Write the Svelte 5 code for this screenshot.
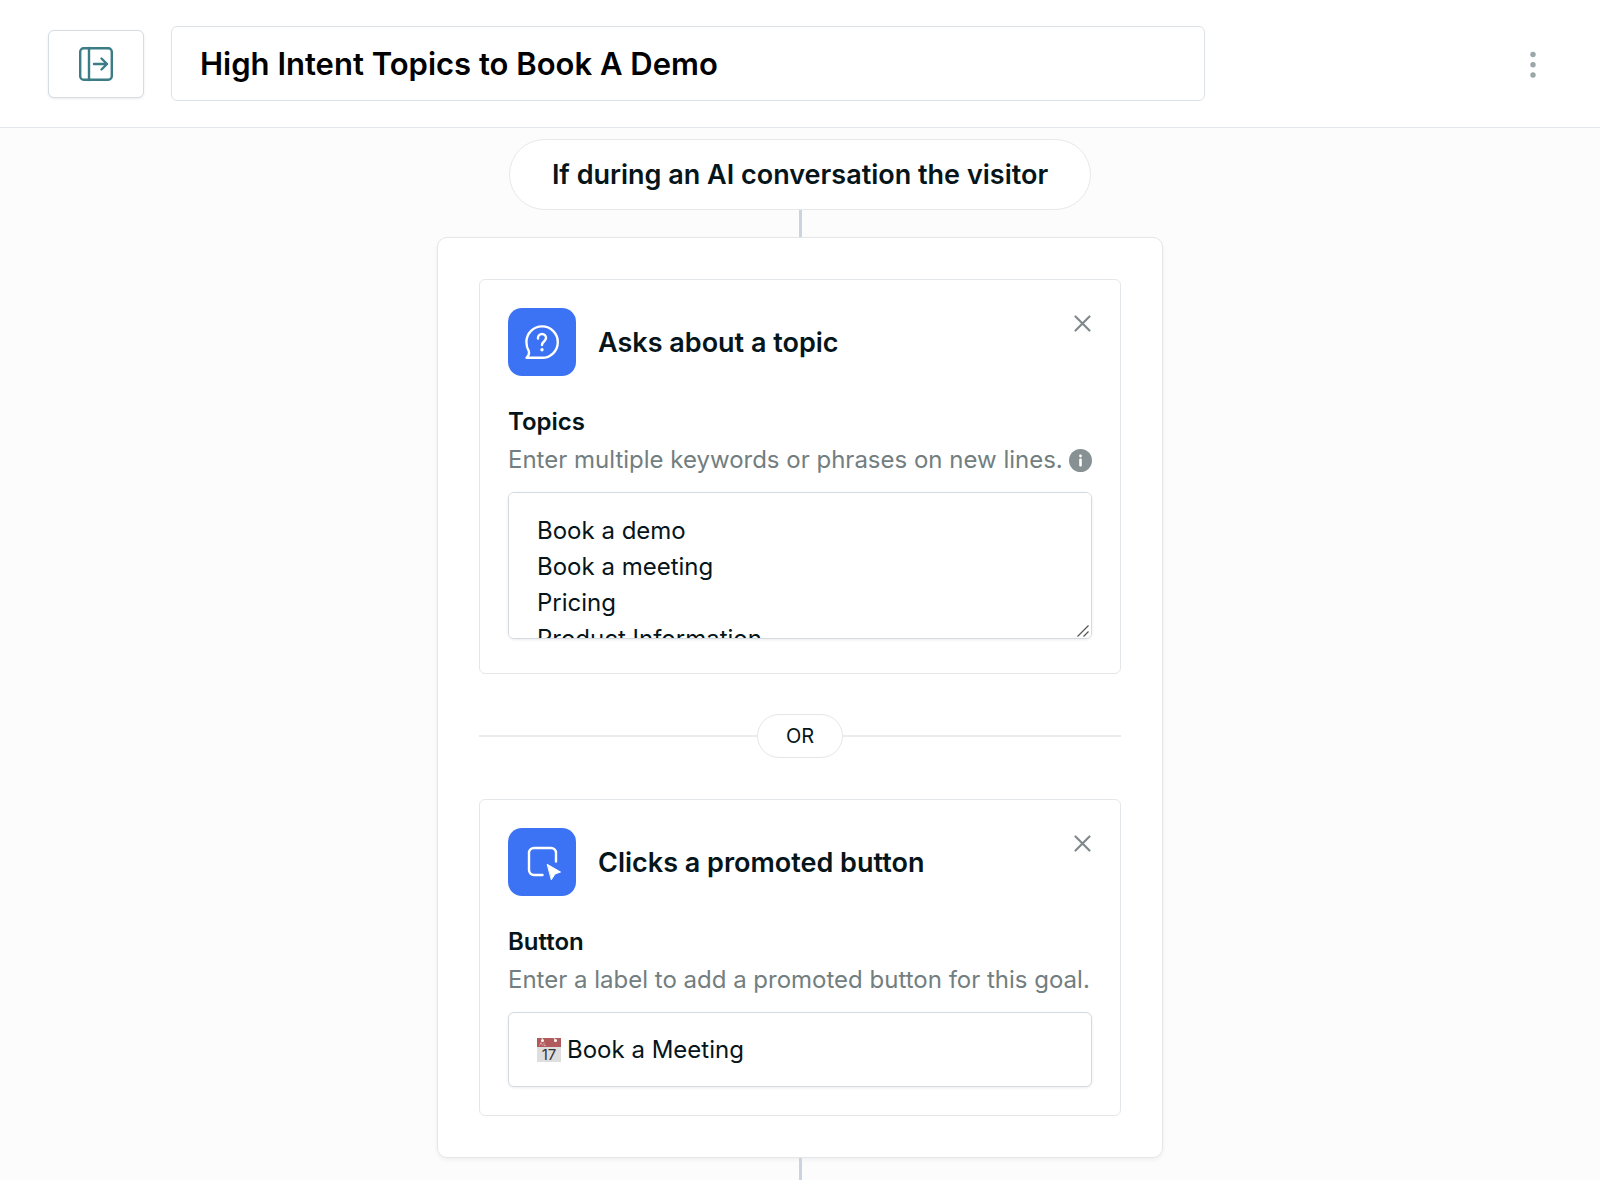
<script>
	let title = $state('High Intent Topics to Book A Demo');
	let topics = $state('Book a demo\nBook a meeting\nPricing\nProduct Information');
	let buttonLabel = $state('Book a Meeting');
</script>

{#snippet closeIcon()}
	<svg width="18" height="18" viewBox="0 0 18 18" fill="none" stroke="#7f8a8c" stroke-width="2.200" stroke-linecap="round" aria-hidden="true">
		<path d="M1.500 1.500l14 14M15.500 1.500l-14 14" />
	</svg>
{/snippet}

<div class="page">
	<header class="topbar">
		<button class="panel-toggle" aria-label="Toggle side panel">
			<svg width="34" height="34" viewBox="0 0 34 34" fill="none" stroke="#3b7c86" stroke-width="2.400" stroke-linecap="round" stroke-linejoin="round" aria-hidden="true">
				<rect x="1.200" y="1.200" width="31.600" height="31.600" rx="3.500" />
				<path d="M10 1v32" />
				<path d="M15 17h13M22.500 11.500l5.500 5.500-5.500 5.500" />
			</svg>
		</button>
		<input class="title-input" type="text" aria-label="Goal name" bind:value={title} />
		<button class="more" aria-label="More options">
			<svg width="6" height="26" viewBox="0 0 6 26" fill="#9aa6a8" aria-hidden="true">
				<circle cx="3" cy="3.500" r="2.700" />
				<circle cx="3" cy="13.700" r="2.700" />
				<circle cx="3" cy="24" r="2.700" />
			</svg>
		</button>
	</header>

	<main class="canvas">
		<h1 class="trigger">If during an AI conversation the visitor</h1>
		<div class="connector"></div>

		<section class="group">
			<article class="condition">
				<div class="condition-head">
					<span class="badge">
						<svg width="34" height="34" viewBox="0 0 34 34" fill="none" stroke="#fff" stroke-width="2.400" stroke-linecap="round" stroke-linejoin="round" aria-hidden="true">
							<path d="M1.500 32.800C3.500 31 4.500 28.800 3.800 26C2.200 23.500 1.400 20.500 1.400 17A15.700 15.700 0 1 1 17 32.800Z" />
							<path d="M13 13.500V13a4 4 0 0 1 8 0c0 3.500-4 3.500-4 7" />
							<circle cx="17" cy="24.800" r="1.700" fill="#fff" stroke="none" />
						</svg>
					</span>
					<h2>Asks about a topic</h2>
					<button class="close" aria-label="Remove condition">{@render closeIcon()}</button>
				</div>
				<label for="topics">Topics</label>
				<div class="hint">
					<span>Enter multiple keywords or phrases on new lines.</span>
					<svg width="23" height="23" viewBox="0 0 23 23" aria-hidden="true">
						<circle cx="11.500" cy="11.500" r="11.500" fill="#879193" />
						<circle cx="11.500" cy="7" r="1.400" fill="#fff" />
						<rect x="10.200" y="9.400" width="2.600" height="8" rx="1" fill="#fff" />
					</svg>
				</div>
				<div class="textarea-wrap">
					<textarea id="topics" class="field" bind:value={topics}></textarea>
					<svg class="grip" width="12" height="12" viewBox="0 0 12 12" fill="none" stroke="#555" stroke-width="1.200" aria-hidden="true">
						<path d="M0.500 11.500l11-11M6.500 11.500l5-5" />
					</svg>
				</div>
			</article>

			<div class="divider"><span>OR</span></div>

			<article class="condition">
				<div class="condition-head">
					<span class="badge">
						<svg width="34" height="34" viewBox="0 0 34 34" fill="none" stroke="#fff" stroke-width="2.400" stroke-linecap="round" stroke-linejoin="round" aria-hidden="true">
							<path d="M17.500 30H9a5 5 0 0 1-5-5V8a5 5 0 0 1 5-5h17a5 5 0 0 1 5 5v8.500" />
							<path d="M22.500 19.500L35.500 27L30 29L26.500 34.500Z" fill="#fff" stroke-width="1" />
						</svg>
					</span>
					<h2>Clicks a promoted button</h2>
					<button class="close" aria-label="Remove condition">{@render closeIcon()}</button>
				</div>
				<label for="button-label">Button</label>
				<div class="hint">
					<span>Enter a label to add a promoted button for this goal.</span>
				</div>
				<div class="field input-wrap">
					<svg width="24" height="24" viewBox="0 0 24 24" aria-hidden="true">
						<rect width="24" height="24" fill="#dedede" />
						<rect width="24" height="9" fill="#b05a5c" />
						<path d="M2.500 7.500l1.500-3 1.500 3M7 4.500v3h2" fill="none" stroke="#d9a3a3" stroke-width="1" />
						<circle cx="5.500" cy="2.500" r="1.500" fill="#fff" />
						<circle cx="18.500" cy="2.500" r="1.500" fill="#fff" />
						<path d="M5 0l1 2.500M17 0l1.500 2.500" stroke="#e8dede" stroke-width="1" />
						<text x="12" y="22" text-anchor="middle" font-size="15" fill="#333">17</text>
					</svg>
					<input id="button-label" type="text" bind:value={buttonLabel} />
				</div>
			</article>
		</section>
		<div class="connector tail"></div>
	</main>
</div>

<style>
	:global(body) {
		background: #fcfcfc;
	}

	.page {
		display: flex;
		flex-direction: column;
		min-height: 100vh;
		font-family: Inter, "Liberation Sans", sans-serif;
		color: #06151a;
	}

	.page, .page * {
		box-sizing: border-box;
	}

	button, input, textarea {
		font-family: inherit;
		color: inherit;
		margin: 0;
	}

	svg {
		display: block;
		flex: none;
		overflow: visible;
	}

	.topbar {
		display: flex;
		align-items: center;
		gap: 27px;
		padding: 26px 48px;
		background: #fff;
		border-bottom: 1px solid #e3e6ea;
	}

	.panel-toggle {
		display: flex;
		align-items: center;
		justify-content: center;
		width: 96px;
		height: 68px;
		background: #fff;
		border: 1px solid #d5dde3;
		border-radius: 6px;
		box-shadow: 0 1px 3px rgba(0, 0, 0, 0.08);
	}

	.title-input {
		flex: 0 1 1034px;
		min-width: 0;
		height: 75px;
		padding: 0 28px;
		border: 1px solid #dde2e7;
		border-radius: 6px;
		font-size: 31px;
		font-weight: 600;
		color: #000;
	}

	.more {
		margin-left: auto;
		padding: 10px 16px;
		border: none;
		background: none;
	}

	.canvas {
		flex: 1;
		display: flex;
		flex-direction: column;
		align-items: center;
		padding: 11px 16px 0;
	}

	.trigger {
		margin: 0;
		padding: 0 42px;
		border: 1px solid #e6e8eb;
		border-radius: 36px;
		background: #fff;
		font-size: 27px;
		font-weight: 600;
		line-height: 69px;
	}

	.connector {
		width: 3px;
		height: 27px;
		background: #cbd3dc;
	}

	.tail {
		flex: 1;
		height: auto;
	}

	.group {
		width: 100%;
		max-width: 726px;
		padding: 41px;
		border: 1px solid #e4e7ea;
		border-radius: 10px;
		background: #fff;
		box-shadow: 0 2px 4px rgba(0, 0, 0, 0.05);
	}

	.condition {
		padding: 28px;
		border: 1px solid #e4e7ea;
		border-radius: 6px;
	}

	.condition-head {
		display: flex;
		align-items: center;
		gap: 22px;
		margin-bottom: 28px;
	}

	.badge {
		display: flex;
		align-items: center;
		justify-content: center;
		width: 68px;
		height: 68px;
		border-radius: 14px;
		background: #3c73f4;
	}

	h2 {
		margin: 0;
		font-size: 27px;
		font-weight: 600;
	}

	.close {
		align-self: flex-start;
		margin-left: auto;
		padding: 7px 0;
		border: none;
		background: none;
	}

	label {
		display: block;
		font-size: 24px;
		font-weight: 600;
		line-height: 36px;
	}

	.hint {
		display: flex;
		align-items: center;
		justify-content: space-between;
		margin: 2px 0 14px;
		font-size: 24px;
		line-height: 36px;
		white-space: nowrap;
		color: #727e80;
	}

	.field {
		display: block;
		width: 100%;
		border: 1px solid #d3dae1;
		border-radius: 6px;
		background: #fff;
		box-shadow: 0 1px 3px rgba(0, 0, 0, 0.08);
		font-size: 24px;
		line-height: 36px;
	}

	.textarea-wrap {
		position: relative;
		margin-bottom: 6px;
	}

	textarea {
		height: 147px;
		padding: 20px 28px;
		resize: none;
		scrollbar-width: none;
	}

	.grip {
		position: absolute;
		right: 3px;
		bottom: 2px;
	}

	.divider {
		display: flex;
		align-items: center;
		margin: 40px 0 41px;
	}

	.divider::before,
	.divider::after {
		content: "";
		flex: 1;
		height: 2px;
		background: #e9ebed;
	}

	.divider span {
		padding: 0 28px;
		border: 1px solid #e4e7ea;
		border-radius: 22px;
		font-size: 20px;
		line-height: 42px;
	}

	.input-wrap {
		display: flex;
		align-items: center;
		gap: 6px;
		height: 75px;
		padding: 0 28px;
	}

	.input-wrap input {
		flex: 1;
		min-width: 0;
		padding: 0;
		border: none;
		outline: none;
		background: none;
		font-size: 24px;
	}
</style>
